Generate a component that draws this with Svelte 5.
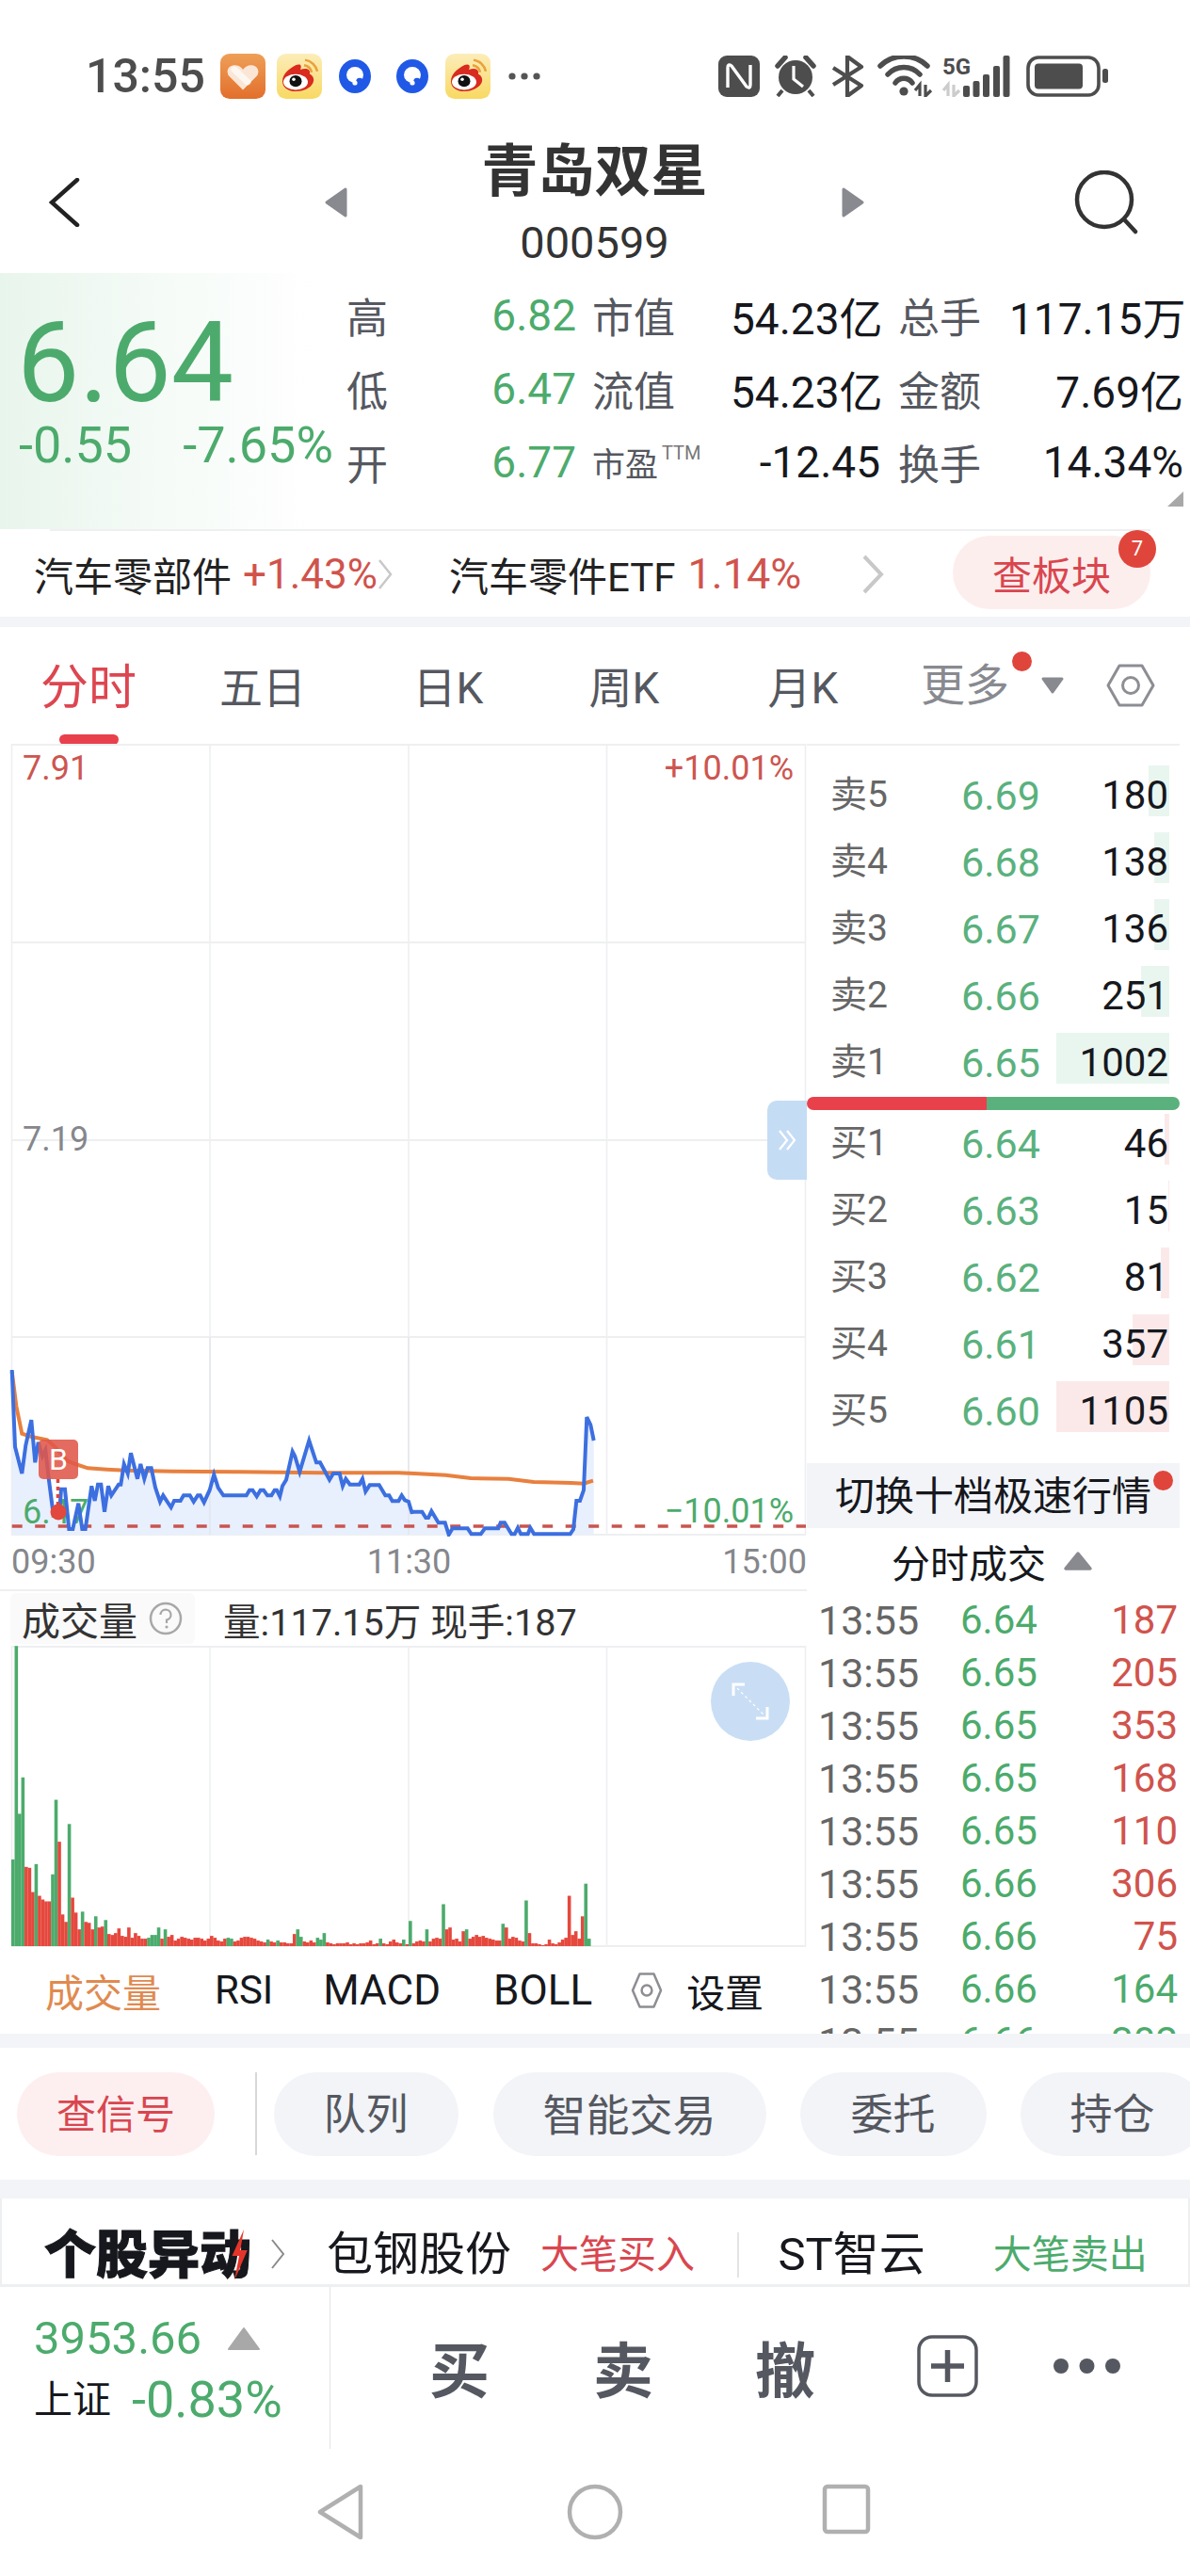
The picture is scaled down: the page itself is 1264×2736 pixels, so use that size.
<script>
  const stats = [
    { a: '高', av: '6.82', b: '市值', bv: '54.23亿', c: '总手', cv: '117.15万' },
    { a: '低', av: '6.47', b: '流值', bv: '54.23亿', c: '金额', cv: '7.69亿' },
    { a: '开', av: '6.77', b: '市盈', ttm: true, bv: '-12.45', c: '换手', cv: '14.34%' }
  ];
  const tabs = [
    { t: '分时', w: 188, on: true },
    { t: '五日', w: 182 },
    { t: '日K', w: 212 },
    { t: '周K', w: 162 },
    { t: '月K', w: 218 }
  ];
  const sells = [
    ['卖5', '6.69', '180', 22],
    ['卖4', '6.68', '138', 16],
    ['卖3', '6.67', '136', 16],
    ['卖2', '6.66', '251', 30],
    ['卖1', '6.65', '1002', 120]
  ];
  const buys = [
    ['买1', '6.64', '46', 5],
    ['买2', '6.63', '15', 1],
    ['买3', '6.62', '81', 9],
    ['买4', '6.61', '357', 39],
    ['买5', '6.60', '1105', 120]
  ];
  const deals = [
    ['6.64', '187', 'r'], ['6.65', '205', 'r'], ['6.65', '353', 'r'], ['6.65', '168', 'r'],
    ['6.65', '110', 'r'], ['6.66', '306', 'r'], ['6.66', '75', 'r'], ['6.66', '164', 'g'], ['6.66', '302', 'g']
  ];

  const z4 = [[38,165],[48,410],[70,495],[82,405],[100,325],[112,460],[122,395],[135,440],[145,420],[155,510],[168,610],[190,610],[195,545],[207,545],[220,672],[232,672],[250,590],[262,672],[272,672],[292,535],[302,582],[312,530],[322,530],[333,617],[345,535],[355,565],[378,530],[385,530],[395,465],[407,495],[417,430],[438,512],[448,465],[460,512],[470,478],[482,478],[495,540],[510,585],[520,565],[545,603],[555,582],[575,582],[585,565],[605,565],[617,585],[630,565],[638,565],[650,587],[668,548],[682,498],[695,540],[712,565],[785,565],[795,548],[805,548],[818,568],[830,548],[840,548],[852,565],[865,565],[875,548],[882,548],[892,568],[900,535],[912,515],[932,425],[940,440],[955,490],[985,390],[1008,460],[1020,460],[1050,515],[1062,495],[1082,495],[1092,535],[1102,512],[1115,530],[1145,530],[1155,512],[1165,552],[1178,532],[1208,532],[1228,565],[1240,565],[1250,583],[1270,583],[1280,565],[1290,580],[1302,585],[1312,618]];
  const z9 = [[0,497],[25,497],[37,516],[45,516],[55,495],[77,532],[98,532],[110,570],[122,550],[170,550],[182,568],[212,568],[225,550],[268,550],[275,532],[288,532],[310,568],[320,568],[330,548],[340,568],[362,568],[370,548],[382,568],[497,568],[507,553],[517,462],[528,462],[540,428],[550,195],[562,220],[572,270]];
  const o4 = [[38,170],[52,280],[70,368],[100,378],[150,388],[175,410],[215,455],[240,465],[280,478],[340,482],[400,485],[550,488],[750,490],[1020,493],[1270,493]];
  const o9 = [[0,375],[100,380],[180,390],[300,392],[380,402],[500,405],[540,407],[570,398]];
  const fmt = (a) => a.map((p) => p[0].toFixed(1) + ',' + p[1].toFixed(1)).join(' ');
  const from4 = (a) => a.map(([x, y]) => [x / 3, 1400 + y / 3]);
  const from9 = (a) => a.map(([x, y]) => [440 + x / 3, 1440 + y / 3]);
  const blue = [...from4(z4), ...from9(z9)];
  const orange = [...from4(o4), ...from9(o9)];
  const bluePts = fmt(blue);
  const orangePts = fmt(orange);
  const fillPts = fmt([...blue, [blue[blue.length - 1][0], 1630], [blue[0][0], 1630]]);

  // volume: positive = red, negative = green, heights in px
  const vol = [-93,-322,-142,-181,85,84,58,-88,54,50,48,48,-77,-157,112,34,26,-131,52,36,18,-37,26,25,18,-32,20,21,-28,13,
    12,14,19,11,10,20,9,14,11,8,8,-9,-12,-12,-20,8,-18,10,12,6,8,10,9,8,7,9,9,8,6,8,11,9,6,5,8,-9,-8,5,6,9,10,10,9,8,6,5,4,-7,5,4,-6,4,4,3,3,13,-18,-10,5,4,6,4,-9,-7,-14,4,3,2,3,3,3,4,2,3,2,3,3,4,6,2,3,-8,3,2,5,7,4,3,-7,2,-27,3,5,6,5,-18,5,8,9,8,-45,18,20,7,8,5,16,-18,8,10,12,10,11,9,8,7,6,6,-24,20,8,10,9,6,5,-49,14,3,3,2,1,2,7,3,2,4,7,9,54,12,16,8,32,-67,-8];
  const volBars = vol.map((h, i) => ({ x: 12 + i * 3.517, h: Math.abs(h) * 0.99, up: h > 0 }));
  const gridX = [12.5, 223, 434, 644.5, 855.5];
  const gridY = [791, 1001, 1211, 1420, 1630];
</script>

<div class="page">
  <header class="status">
    <span class="time">13:55</span>
    <svg class="ic48" viewBox="0 0 48 51" preserveAspectRatio="none">
      <defs>
        <linearGradient id="hb" x1="0" y1="0" x2="0" y2="1"><stop offset="0" stop-color="#ee9f57"/><stop offset="1" stop-color="#e26f2c"/></linearGradient>
      </defs>
      <rect width="48" height="51" rx="10" fill="url(#hb)"/>
      <path d="M24 41 L9 25 C3 14 18 8 24 18 C30 8 45 14 39 25 Z" fill="#fbe6d6"/>
      <path d="M15 18 L29 32" stroke="#fff" stroke-width="7" stroke-linecap="round" opacity=".7"/>
    </svg>
    <svg class="ic48 gap12" viewBox="0 0 48 51" preserveAspectRatio="none">
      <defs>
        <linearGradient id="wb" x1="0" y1="0" x2="0" y2="1"><stop offset="0" stop-color="#fcedba"/><stop offset="1" stop-color="#f8d962"/></linearGradient>
      </defs>
      <rect width="48" height="51" rx="10" fill="url(#wb)"/>
      <path d="M6 31 C6 23 13 17 20 13 C25 11 27 13 25 18 C31 16 36 17 35 23 C42 26 41 38 26 42 C15 44 6 40 6 31 Z" fill="#d92b20"/>
      <ellipse cx="20" cy="32" rx="13" ry="9" fill="#fff"/>
      <circle cx="20" cy="31" r="6.5" fill="#111"/>
      <circle cx="18" cy="29" r="1.8" fill="#fff"/>
      <path d="M29 13 A10 10 0 0 1 37 21 M30 7 A16 16 0 0 1 43 20" fill="none" stroke="#e9a23b" stroke-width="2.6"/>
    </svg>
    <svg class="ic34 q1" viewBox="0 0 34 36">
      <ellipse cx="17" cy="18" rx="17" ry="18" fill="#2059e6"/>
      <ellipse cx="17" cy="16.5" rx="9" ry="8.5" fill="#fff"/>
      <circle cx="22" cy="23.5" r="3.8" fill="#2059e6"/>
      <circle cx="17" cy="25" r="2.6" fill="#fff"/>
    </svg>
    <svg class="ic34 q2" viewBox="0 0 34 36">
      <ellipse cx="17" cy="18" rx="17" ry="18" fill="#2059e6"/>
      <ellipse cx="17" cy="16.5" rx="9" ry="8.5" fill="#fff"/>
      <circle cx="22" cy="23.5" r="3.8" fill="#2059e6"/>
      <circle cx="17" cy="25" r="2.6" fill="#fff"/>
    </svg>
    <svg class="ic48 q3" viewBox="0 0 48 51" preserveAspectRatio="none">
      <rect width="48" height="51" rx="10" fill="url(#wb)"/>
      <path d="M6 31 C6 23 13 17 20 13 C25 11 27 13 25 18 C31 16 36 17 35 23 C42 26 41 38 26 42 C15 44 6 40 6 31 Z" fill="#d92b20"/>
      <ellipse cx="20" cy="32" rx="13" ry="9" fill="#fff"/>
      <circle cx="20" cy="31" r="6.5" fill="#111"/>
      <circle cx="18" cy="29" r="1.8" fill="#fff"/>
      <path d="M29 13 A10 10 0 0 1 37 21 M30 7 A16 16 0 0 1 43 20" fill="none" stroke="#e9a23b" stroke-width="2.6"/>
    </svg>
    <svg class="dots" viewBox="0 0 34 8"><circle cx="4" cy="4" r="3.6" fill="#555"/><circle cx="17" cy="4" r="3.6" fill="#555"/><circle cx="30" cy="4" r="3.6" fill="#555"/></svg>

    <svg class="sys" viewBox="0 0 414 44">
      <rect x="0" y="0" width="44" height="44" rx="9" fill="#4d4d4d"/>
      <path d="M10 34 V13 Q10 8 14 11 L30 33 Q34 36 34 31 V10" fill="none" stroke="#fff" stroke-width="3.4"/>
      <circle cx="82" cy="23" r="18" fill="#4d4d4d"/>
      <path d="M63 11 L71 2 M101 11 L93 2" stroke="#4d4d4d" stroke-width="5.5" stroke-linecap="round"/>
      <path d="M68 37 L63 43 M96 37 L101 43" stroke="#4d4d4d" stroke-width="4"/>
      <path d="M80 11 V25 L90 33" fill="none" stroke="#fff" stroke-width="3.2"/>
      <path d="M122 13 L152 32 L137 43 V1 L152 12 L122 31" fill="none" stroke="#4d4d4d" stroke-width="4.2" stroke-linejoin="round"/>
      <path d="M172 11 A36 36 0 0 1 222 11 M180 20 A23 23 0 0 1 214 20 M188 29 A11 11 0 0 1 206 29" fill="none" stroke="#4d4d4d" stroke-width="5.5" stroke-linecap="round"/>
      <circle cx="197" cy="38" r="4.6" fill="#4d4d4d"/>
      <path d="M214 43 V31 L209 37 M220 31 V43 L226 37" fill="none" stroke="#4d4d4d" stroke-width="3.2"/>
      <text x="238" y="20" class="fiveg">5G</text>
      <path d="M244 43 V31 L239 37 M250 31 V43 L256 37" fill="none" stroke="#ccc" stroke-width="3.2"/>
      <g fill="#4d4d4d">
        <rect x="260" y="32" width="7" height="12" rx="2"/>
        <rect x="270.5" y="27" width="7" height="17" rx="2"/>
        <rect x="281" y="20" width="7" height="24" rx="2"/>
        <rect x="292" y="11" width="7" height="33" rx="2"/>
        <rect x="302.5" y="0" width="7" height="44" rx="2"/>
      </g>
      <rect x="329" y="2" width="75" height="40" rx="11" fill="none" stroke="#4d4d4d" stroke-width="3.6"/>
      <rect x="336" y="8.5" width="51" height="27" rx="4" fill="#4d4d4d"/>
      <rect x="408" y="14" width="6" height="15" rx="2.5" fill="#4d4d4d"/>
    </svg>
  </header>

  <section class="titlebar">
    <svg class="back" viewBox="0 0 34 52"><path d="M30 2 L3 26 L30 50" fill="none" stroke="#222" stroke-width="4.5" stroke-linecap="round"/></svg>
    <svg class="arrow" viewBox="0 0 24 32"><path d="M22 2 V30 L2 16 Z" fill="#888a90" stroke="#888a90" stroke-width="3" stroke-linejoin="round"/></svg>
    <div class="name">
      <div class="title">青岛双星</div>
      <div class="code">000599</div>
    </div>
    <svg class="arrow" viewBox="0 0 24 32"><path d="M2 2 V30 L22 16 Z" fill="#888a90" stroke="#888a90" stroke-width="3" stroke-linejoin="round"/></svg>
    <svg class="search" viewBox="0 0 70 68"><circle cx="33" cy="31" r="29" fill="none" stroke="#333" stroke-width="4.5"/><path d="M54 52 L66 65" stroke="#333" stroke-width="4.5" stroke-linecap="round"/></svg>
  </section>

  <section class="quote">
    <div class="last">
      <div class="big">6.64</div>
      <div class="chg"><span>-0.55</span><span>-7.65%</span></div>
    </div>
    <div class="stats">
      {#each stats as r}
        <span class="lab">{r.a}</span><span class="val up">{r.av}</span>
        <span class="lab pad1">{#if r.ttm}<span class="sm">{r.b}</span><sup>TTM</sup>{:else}{r.b}{/if}</span><span class="val">{r.bv}</span>
        <span class="lab pad2">{r.c}</span><span class="val">{r.cv}</span>
      {/each}
    </div>
    <span class="corner"></span>
  </section>

  <div class="rule"></div>
  <section class="sector">
    <span class="sname">汽车零部件</span>
    <span class="spct one">+1.43%</span>
    <svg class="chev c1" viewBox="0 0 16 34"><path d="M2 2 L14 17 L2 32" fill="none" stroke="#c8c8c8" stroke-width="2.5"/></svg>
    <span class="sname two">汽车零件ETF</span>
    <span class="spct three">1.14%</span>
    <svg class="chev c2" viewBox="0 0 26 42"><path d="M4 2 L22 21 L4 40" fill="none" stroke="#c8c8c8" stroke-width="4"/></svg>
    <div class="board">查板块<i class="badge">7</i></div>
  </section>
  <div class="band b10"></div>

  <nav class="tabs">
    {#each tabs as t}
      <div class="tab" class:on={t.on} style:width="{t.w}px">{t.t}{#if t.on}<i class="ind-bar"></i>{/if}</div>
    {/each}
    <div class="more">更多<i class="dot"></i></div>
    <svg class="caret" viewBox="0 0 26 20"><path d="M3 3 H23 L13 17 Z" fill="#888a90" stroke="#888a90" stroke-width="3" stroke-linejoin="round"/></svg>
    <svg class="hex" viewBox="0 0 52 46"><path d="M14 2 H38 L50 23 L38 44 H14 L2 23 Z" fill="none" stroke="#8c8e93" stroke-width="3" stroke-linejoin="round"/><circle cx="26" cy="23" r="8.5" fill="none" stroke="#8c8e93" stroke-width="3"/></svg>
  </nav>

  <main class="main">
    <div class="left">
      <div class="pricebox">
        <svg class="pricesvg" viewBox="0 790 857 842" width="857" height="842">
          {#each gridY as y}<line x1="12" x2="856" y1={y} y2={y} stroke="#eeeff1" stroke-width="2"/>{/each}
          {#each gridX as x}<line x1={x} x2={x} y1="790" y2="1630" stroke="#eeeff1" stroke-width="1.6"/>{/each}
          <polygon points={fillPts} fill="#e8effd"/>
          {#each gridX.slice(1, 3) as x}<line x1={x} x2={x} y1="1420" y2="1630" stroke="#e4e6ea" stroke-width="1.4"/>{/each}
          <text x="24" y="1618" class="lbl" fill="#4cab6c">6.47</text>
          <line x1="12.7" x2="856" y1="1621" y2="1621" stroke="#c9544e" stroke-width="3.6" stroke-dasharray="11 13.5"/>
          <polyline points={orangePts} fill="none" stroke="#e8803f" stroke-width="4"/>
          <polyline points={bluePts} fill="none" stroke="#3c6fe0" stroke-width="4" stroke-linejoin="miter"/>
          <line x1="61.5" x2="61.5" y1="1571" y2="1600" stroke="#d9483e" stroke-width="3.5" stroke-dasharray="4 4"/>
          <rect x="41" y="1529" width="42" height="42" rx="5" fill="#e0564a" opacity=".88"/>
          <text x="62" y="1561" class="bmark">B</text>
          <circle cx="62" cy="1606" r="8.5" fill="#e2483d"/>
          <text x="24" y="828" class="lbl" fill="#cd5550">7.91</text>
          <text x="843" y="828" class="lbl end" fill="#cd5550">+10.01%</text>
          <text x="24" y="1222" class="lbl" fill="#85878c">7.19</text>
          <text x="843" y="1617" class="lbl end" fill="#4cab6c">−10.01%</text>
        </svg>
        <div class="fold"><svg viewBox="0 0 20 24" width="20" height="24"><path d="M2 2 L10 12 L2 22 M10 2 L18 12 L10 22" fill="none" stroke="#fff" stroke-width="2.2"/></svg></div>
      </div>
      <div class="axis"><span>09:30</span><span>11:30</span><span>15:00</span></div>
      <div class="volhead">
        <div class="chip">成交量<svg viewBox="0 0 36 36" width="36" height="36"><circle cx="18" cy="18" r="16" fill="none" stroke="#a8a8a8" stroke-width="2.5"/><path d="M12.5 14 A5.5 5.5 0 1 1 19 19.5 V23" fill="none" stroke="#a8a8a8" stroke-width="2.2"/><circle cx="19" cy="27" r="1.6" fill="#a8a8a8"/></svg></div>
        <span class="volinfo">量:117.15万 现手:187</span>
      </div>
      <div class="volbox">
        <svg viewBox="0 1748 857 320" width="857" height="320">
          <line x1="12" x2="856" y1="1749" y2="1749" stroke="#eeeff1" stroke-width="2"/>
          <line x1="12" x2="856" y1="2067" y2="2067" stroke="#eeeff1" stroke-width="2"/>
          {#each gridX as x}<line x1={x} x2={x} y1="1748" y2="2067" stroke="#eeeff1" stroke-width="1.6"/>{/each}
          {#each volBars as b}
            <rect x={b.x} y={2067 - b.h} width="3.6" height={b.h} fill={b.up ? '#e5483d' : '#4cab6c'}/>
          {/each}
        </svg>
        <div class="expand"><svg viewBox="0 0 40 40" width="40" height="40"><path d="M2 14 V2 H14 M38 26 V38 H26" fill="none" stroke="#fff" stroke-width="3"/><path d="M6 6 L34 34" stroke="#fff" stroke-width="1.2" stroke-dasharray="3 3"/></svg></div>
      </div>
      <div class="inds">
        <span class="act">成交量</span>
        <span class="i1">RSI</span>
        <span class="i2">MACD</span>
        <span class="i3">BOLL</span>
        <svg class="i4" viewBox="0 0 40 48" width="36" height="40"><path d="M11 3 H29 L38 24 L29 45 H11 L2 24 Z" fill="none" stroke="#8c8e93" stroke-width="3" stroke-linejoin="round"/><circle cx="20" cy="24" r="6.5" fill="none" stroke="#8c8e93" stroke-width="3"/></svg>
        <span class="i5">设置</span>
      </div>
    </div>

    <div class="right">
      <div class="book">
        {#each sells as r}
          <div class="row"><span class="rl">{r[0]}</span><span class="rp">{r[1]}</span><span class="rq">{r[2]}</span><i class="depth sell" style:width="{r[3]}px"></i></div>
        {/each}
        <div class="ratio"></div>
        {#each buys as r}
          <div class="row"><span class="rl">{r[0]}</span><span class="rp">{r[1]}</span><span class="rq">{r[2]}</span><i class="depth buy" style:width="{r[3]}px"></i></div>
        {/each}
      </div>
      <div class="switch">切换十档极速行情<i class="sdot"></i></div>
      <div class="dealhead">分时成交<svg viewBox="0 0 32 22" width="32" height="22"><path d="M16 3 L29 19 H3 Z" fill="#888a90" stroke="#888a90" stroke-width="3.5" stroke-linejoin="round"/></svg></div>
      {#each deals as d}
        <div class="deal"><span class="dt">13:55</span><span class="dp">{d[0]}</span><span class="dq" class:g={d[2] === 'g'}>{d[1]}</span></div>
      {/each}
    </div>
  </main>

  <div class="band b15"></div>
  <section class="actions">
    <div class="pill hot">查信号</div>
    <i class="vr"></i>
    <div class="pill p1">队列</div>
    <div class="pill p2">智能交易</div>
    <div class="pill p3">委托</div>
    <div class="pill p4">持仓</div>
  </section>
  <div class="band b20"></div>
  <section class="ticker">
    <div class="logo">个股异动<svg class="bolt" viewBox="0 0 16 54" width="20" height="54" preserveAspectRatio="none"><path d="M12 0 L2 28 H8 L4 54 L15 22 H9 Z" fill="#e5352b"/></svg></div>
    <svg class="chev c3" viewBox="0 0 16 34"><path d="M2 2 L14 17 L2 32" fill="none" stroke="#8a8a8a" stroke-width="2"/></svg>
    <span class="tn t1">包钢股份</span>
    <span class="tg red">大笔买入</span>
    <i class="tvr"></i>
    <span class="tn t2">ST智云</span>
    <span class="tg grn">大笔卖出</span>
  </section>
  <section class="bottom">
    <div class="index">
      <div class="il1"><span>3953.66</span><svg viewBox="0 0 36 26" width="36" height="26"><path d="M18 2 L34 24 H2 Z" fill="#a8a8a8" stroke="#a8a8a8" stroke-width="2" stroke-linejoin="round"/></svg></div>
      <div class="il2"><span class="sh">上证</span><span class="shp">-0.83%</span></div>
    </div>
    <div class="ops">
      <span class="o1">买</span>
      <span class="o2">卖</span>
      <span class="o3">撤</span>
      <svg class="plus" viewBox="0 0 65 66" width="65" height="66"><rect x="2" y="2" width="61" height="62" rx="14" fill="none" stroke="#555860" stroke-width="3.5"/><path d="M32.5 16 V50 M15 33 H50" stroke="#555860" stroke-width="5.5"/></svg>
      <svg class="more3" viewBox="0 0 73 18" width="73" height="18"><circle cx="9" cy="9" r="8" fill="#555860"/><circle cx="36.5" cy="9" r="8" fill="#555860"/><circle cx="64" cy="9" r="8" fill="#555860"/></svg>
    </div>
  </section>
  <footer class="navbar">
    <svg viewBox="0 0 50 60" width="50" height="60"><path d="M46 3 V57 L3 30 Z" fill="none" stroke="#b0b0b0" stroke-width="4.5" stroke-linejoin="round"/></svg>
    <svg class="navc" viewBox="0 0 60 60" width="60" height="60"><circle cx="30" cy="30" r="27" fill="none" stroke="#b0b0b0" stroke-width="4.5"/></svg>
    <svg class="navs" viewBox="0 0 52 54" width="52" height="54"><rect x="3" y="3" width="46" height="48" rx="3" fill="none" stroke="#b0b0b0" stroke-width="4.5"/></svg>
  </footer>
</div>

<style>
  :global(body) { margin: 0; background: #fff; }
  .page {
    width: 1264px; height: 2736px; overflow: hidden; background: #fff; position: relative;
    font-family: Roboto, "Noto Sans CJK SC", sans-serif; color: #16181d; font-weight: 400;
  }
  i { font-style: normal; display: block; }

  .status { height: 135px; display: flex; align-items: flex-start; padding: 57px 87px 0 91px; box-sizing: border-box; }
  .time { font-size: 50px; font-weight: 500; line-height: 48px; color: #4d4d4d; width: 143px; flex: none; }
  .ic48 { width: 48px; height: 48px; display: block; flex: none; }
  .gap12 { margin-left: 12px; }
  .ic34 { width: 34px; height: 36px; margin-top: 6px; flex: none; }
  .q1 { margin-left: 18px; }
  .q2 { margin-left: 27px; }
  .q3 { margin-left: 18px; }
  .dots { width: 34px; height: 8px; margin: 20px 0 0 19px; flex: none; }
  .sys { width: 414px; height: 44px; margin: 2px 0 0 auto; flex: none; }
  .fiveg { font: 700 24px Roboto, sans-serif; fill: #4d4d4d; }

  .titlebar { height: 155px; display: grid; grid-template-columns: 345px 24px 1fr 24px 346px; align-items: start; }
  .back { width: 34px; height: 52px; margin: 54px 0 0 52px; }
  .arrow { width: 24px; height: 32px; margin-top: 64px; }
  .name { text-align: center; padding-top: 13px; }
  .title { font-size: 60px; line-height: 70px; font-weight: 700; color: #333; }
  .code { font-size: 47px; line-height: 60px; margin-top: 10px; color: #333; }
  .search { width: 70px; height: 68px; margin: 46px 0 0 222px; }

  .quote { height: 272px; display: flex; position: relative; background: linear-gradient(90deg, #e8f5ec 0, #f5fbf7 170px, #fff 340px); box-sizing: border-box; }
  .last { width: 368px; padding-left: 18px; box-sizing: border-box; flex: none; }
  .big { font-size: 118px; line-height: 118px; margin-top: 37px; color: #4cab6c; }
  .chg { display: flex; justify-content: space-between; width: 334px; font-size: 54px; line-height: 54px; color: #4cab6c; margin: 1px 0 0 2px; white-space: nowrap; }
  .stats { display: grid; grid-template-columns: 100px 144px 164px 159px 137px 185px; grid-auto-rows: 78px; align-items: center; padding-top: 6px; font-size: 44px; }
  .lab { color: #555860; white-space: nowrap; }
  .pad1 { padding-left: 17px; }
  .pad2 { padding-left: 19px; }
  .val { text-align: right; white-space: nowrap; font-size: 46px; }
  .up { color: #4cab6c; }
  .sm { font-size: 35px; }
  sup { font-size: 20px; color: #777; vertical-align: 18px; line-height: 0; margin-left: 4px; }
  .corner { position: absolute; right: 7px; top: 232px; width: 17px; height: 16px; background: #a8a8a8; clip-path: polygon(100% 0, 100% 100%, 0 100%); }

  .rule { height: 2px; background: #eeeff1; margin: 0 42px 0 53px; }
  .sector { height: 91px; display: flex; align-items: center; padding-left: 36px; position: relative; font-size: 42px; }
  .sname { white-space: nowrap; color: #222; }
  .spct { color: #d0534c; white-space: nowrap; font-size: 44px; }
  .one { margin-left: 12px; }
  .chev { display: block; flex: none; }
  .c1 { width: 16px; height: 34px; margin-left: 0; }
  .two { margin-left: 60px; font-size: 42px; }
  .three { margin-left: 13px; font-size: 45px; }
  .c2 { width: 26px; height: 42px; margin-left: 63px; }
  .board { position: absolute; left: 1012px; top: 5px; width: 210px; height: 78px; border-radius: 39px; background: #fdeeee; color: #d9464f; display: flex; align-items: center; justify-content: center; }
  .badge { position: absolute; left: 176px; top: -6px; width: 40px; height: 40px; border-radius: 50%; background: #e0453b; color: #fff; font-size: 22px; line-height: 40px; text-align: center; }
  .band { background: #f2f4f8; }
  .b10 { height: 11px; }
  .b15 { height: 15px; }
  .b20 { height: 20px; }

  .tabs { height: 124px; display: flex; align-items: center; position: relative; font-size: 46px; color: #555860; }
  .tab { text-align: center; position: relative; line-height: 60px; flex: none; white-space: nowrap; margin-top: 5px; }
  .tab.on { color: #dd4650; font-size: 51px; }
  .ind-bar { position: absolute; left: 63px; top: 79px; width: 63px; height: 11px; border-radius: 6px; background: #e8414c; }
  .more { margin-left: 16px; color: #888a90; font-size: 47px; position: relative; line-height: 60px; }
  .dot { position: absolute; left: 97px; top: -6px; width: 21px; height: 21px; border-radius: 50%; background: #e0453b; }
  .caret { width: 26px; height: 20px; margin-left: 33px; }
  .hex { width: 52px; height: 46px; margin-left: 44px; }

  .main { height: 1370px; display: flex; overflow: hidden; }
  .left { width: 857px; flex: none; }
  .pricebox { height: 840px; position: relative; }
  .pricesvg { display: block; }
  .lbl { font: 400 36px Roboto, sans-serif; }
  .end { text-anchor: end; }
  .bmark { font: 400 32px Roboto, sans-serif; fill: #fff; text-anchor: middle; }
  .fold { position: absolute; left: 815px; top: 379px; width: 42px; height: 84px; background: #c5dcf5; border-radius: 10px 0 0 10px; display: flex; align-items: center; justify-content: center; }
  .axis { height: 60px; display: flex; justify-content: space-between; align-items: center; padding-left: 12px; border-bottom: 2px solid #eeeff1; box-sizing: border-box; font-size: 36px; color: #85878c; }
  .volhead { height: 58px; display: flex; align-items: center; }
  .chip { margin-left: 11px; width: 196px; height: 54px; box-sizing: border-box; padding-left: 12px; background: #fafafa; border-radius: 6px; display: flex; align-items: center; gap: 12px; font-size: 41px; color: #333; }
  .volinfo { margin-left: 30px; font-size: 39.6px; color: #333; white-space: nowrap; }
  .volbox { height: 319px; position: relative; }
  .volbox svg { display: block; }
  .expand { position: absolute; left: 755px; top: 17px; width: 84px; height: 84px; border-radius: 50%; background: #c9def5; display: flex; align-items: center; justify-content: center; }
  .inds { height: 93px; display: flex; align-items: center; font-size: 44px; color: #16181d; white-space: nowrap; }
  .act { margin-left: 48px; color: #e08a50; font-size: 41px; }
  .i1 { margin-left: 57px; font-size: 42px; }
  .i2 { margin-left: 53px; }
  .i3 { margin-left: 56px; }
  .i4 { margin-left: 40px; flex: none; }
  .i5 { margin-left: 24px; font-size: 41px; }

  .right { width: 396px; flex: none; }
  .book { border-top: 2px solid #eeeff1; padding-top: 15px; height: 763px; box-sizing: border-box; }
  .row { height: 71px; position: relative; display: block; }
  .rl { position: absolute; left: 25px; top: 10px; font-size: 39px; color: #666; line-height: 54px; white-space: nowrap; }
  .rp { position: absolute; left: 164px; top: 11px; font-size: 43px; color: #5ab17d; line-height: 54px; }
  .rq { position: absolute; right: 12px; top: 11px; font-size: 42px; line-height: 54px; z-index: 1; }
  .depth { position: absolute; right: 11px; top: 6px; height: 54px; }
  .sell { background: #e9f6f0; }
  .buy { background: #fbe9ea; }
  .ratio { height: 14px; margin: 3px 0 -2px; border-radius: 7px; background: linear-gradient(90deg, #e8414c 0 191px, #5ab17d 191px); }
  .switch { height: 69px; margin-top: 1px; background: #f2f4f8; text-align: center; font-size: 42px; line-height: 71px; position: relative; color: #16181d; }
  .sdot { position: absolute; left: 368px; top: 8px; width: 21px; height: 21px; border-radius: 50%; background: #e0453b; }
  .dealhead { height: 70px; display: flex; align-items: center; font-size: 41px; padding-left: 90px; gap: 18px; }
  .deal { height: 56px; position: relative; width: 407px; font-size: 42px; line-height: 56px; }
  .dt { position: absolute; left: 12px; color: #666; font-size: 43px; }
  .dp { position: absolute; left: 163px; color: #4cab6c; }
  .dq { position: absolute; left: 0; width: 394px; text-align: right; color: #d0534c; }
  .dq.g { color: #4cab6c; }

  .actions { height: 140px; position: relative; font-size: 45px; color: #555860; display: flex; align-items: center; overflow: hidden; white-space: nowrap; }
  .pill { height: 89px; border-radius: 45px; background: #f2f4f8; display: flex; align-items: center; justify-content: center; flex: none; box-sizing: border-box; padding-bottom: 5px; }
  .hot { width: 210px; margin-left: 18px; background: #fdeff0; color: #d9464f; font-size: 42px; }
  .vr { width: 1.5px; height: 88px; background: #d8d8d8; margin-left: 43px; flex: none; }
  .p1 { width: 196px; margin-left: 18px; }
  .p2 { width: 290px; margin-left: 37px; font-size: 46px; }
  .p3 { width: 198px; margin-left: 36px; }
  .p4 { width: 196px; margin-left: 36px; }

  .ticker { height: 94px; box-sizing: border-box; border: solid #eeeff1; border-width: 0 2px 3px; display: flex; align-items: flex-end; padding-bottom: 3px; white-space: nowrap; position: relative; }
  .logo { margin-left: 45px; font-size: 55px; font-weight: 900; line-height: 56px; color: #16181d; position: relative; width: 222px; flex: none; height: 56px; -webkit-text-stroke: 1px #16181d; }
  .bolt { position: absolute; left: 197px; top: 1px; }
  .c3 { width: 16px; height: 34px; margin: 0 0 12px 18px; }
  .tn { font-size: 49px; line-height: 56px; color: #16181d; }
  .t1 { margin-left: 44px; }
  .tg { font-size: 41px; line-height: 56px; }
  .red { color: #d9464f; margin-left: 31px; }
  .tvr { width: 1.5px; height: 48px; background: #e4e4e4; margin: 0 0 4px 45px; flex: none; }
  .t2 { margin-left: 42px; }
  .grn { color: #4cab6c; margin-left: 72px; }

  .bottom { height: 172px; display: flex; }
  .index { width: 351px; flex: none; box-sizing: border-box; border-right: 1.5px solid #e4e4e4; padding: 28px 0 0 36px; }
  .il1 { display: flex; align-items: center; font-size: 49px; line-height: 54px; color: #4cab6c; }
  .il1 svg { margin-left: 27px; }
  .il2 { display: flex; align-items: center; margin-top: 11px; line-height: 54px; }
  .sh { font-size: 41px; width: 104px; }
  .shp { font-size: 54px; color: #4cab6c; }
  .ops { flex: 1; display: flex; align-items: center; color: #555860; font-size: 64px; font-weight: 700; height: 168px; }
  .o1 { margin-left: 105px; }
  .o2 { margin-left: 110px; }
  .o3 { margin-left: 108px; }
  .plus { margin-left: 108px; flex: none; }
  .more3 { margin-left: 79px; flex: none; }

  .navbar { height: 136px; display: flex; padding: 37px 0 0 337px; align-items: flex-start; box-sizing: border-box; }
  .navc { margin-left: 215px; }
  .navs { margin-left: 211px; }
</style>
